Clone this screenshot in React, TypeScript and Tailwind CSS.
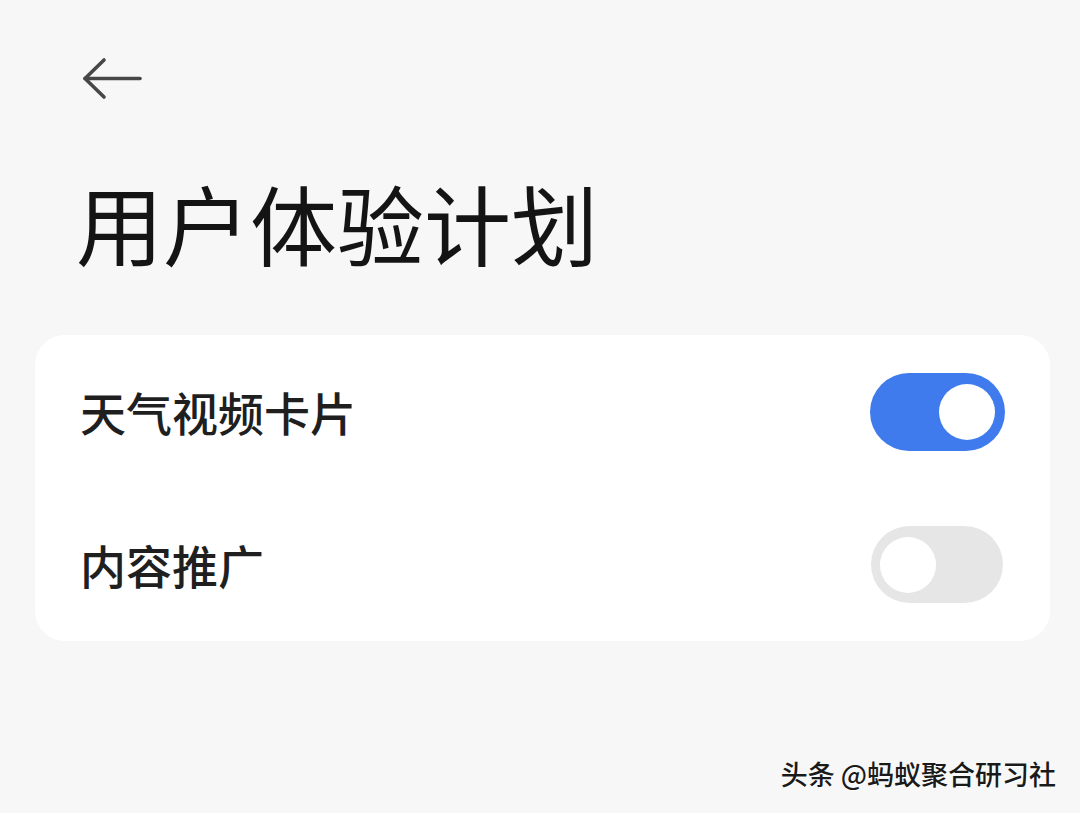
import { useState } from "react";

const font = { fontFamily: '"Noto Sans CJK SC", "Noto Sans", sans-serif' };

function Toggle({ on, onChange }: { on: boolean; onChange: () => void }) {
  return (
    <button
      onClick={onChange}
      className={
        on
          ? "flex h-[78px] w-[135px] items-center justify-end rounded-full bg-[#3f7bec] px-[10px]"
          : "flex h-[77px] w-[132px] items-center justify-start rounded-full bg-[#e6e6e6] px-[9px]"
      }
    >
      <span className="block h-[56px] w-[56px] rounded-full bg-white" />
    </button>
  );
}

export default function App() {
  const [weather, setWeather] = useState(true);
  const [promo, setPromo] = useState(false);

  return (
    <div className="relative h-[813px] w-[1080px] overflow-hidden bg-[#f7f7f7]" style={font}>
      <div className="pl-[82px] pt-[57px]">
        <svg width="60" height="43" viewBox="0 0 60 43" fill="none" stroke="#474747" strokeWidth="3.6" strokeLinecap="round" strokeLinejoin="round">
          <path d="M58 21.5H3" />
          <path d="M22 3L3 21.5 22 40" />
        </svg>
      </div>

      <h1 className="ml-[76px] mt-[79px] h-[87px] text-[87px] font-normal leading-none text-[#141414]">
        用户体验计划
      </h1>

      <div className="ml-[35px] mr-[30px] mt-[69px] rounded-[30px] bg-white">
        <div className="flex h-[153px] items-center justify-between pl-[45px] pr-[45px]">
          <span className="text-[46px] font-medium text-[#1f1f1f]">天气视频卡片</span>
          <Toggle on={weather} onChange={() => setWeather(!weather)} />
        </div>
        <div className="flex h-[153px] items-center justify-between pl-[45px] pr-[47px]">
          <span className="text-[46px] font-medium text-[#1f1f1f]">内容推广</span>
          <Toggle on={promo} onChange={() => setPromo(!promo)} />
        </div>
      </div>

      <div className="absolute right-[24px] top-[754px] text-[27px] font-medium text-[#1a1a1a] [text-shadow:1px_1px_0_#fff]">
        头条 @蚂蚁聚合研习社
      </div>
    </div>
  );
}
